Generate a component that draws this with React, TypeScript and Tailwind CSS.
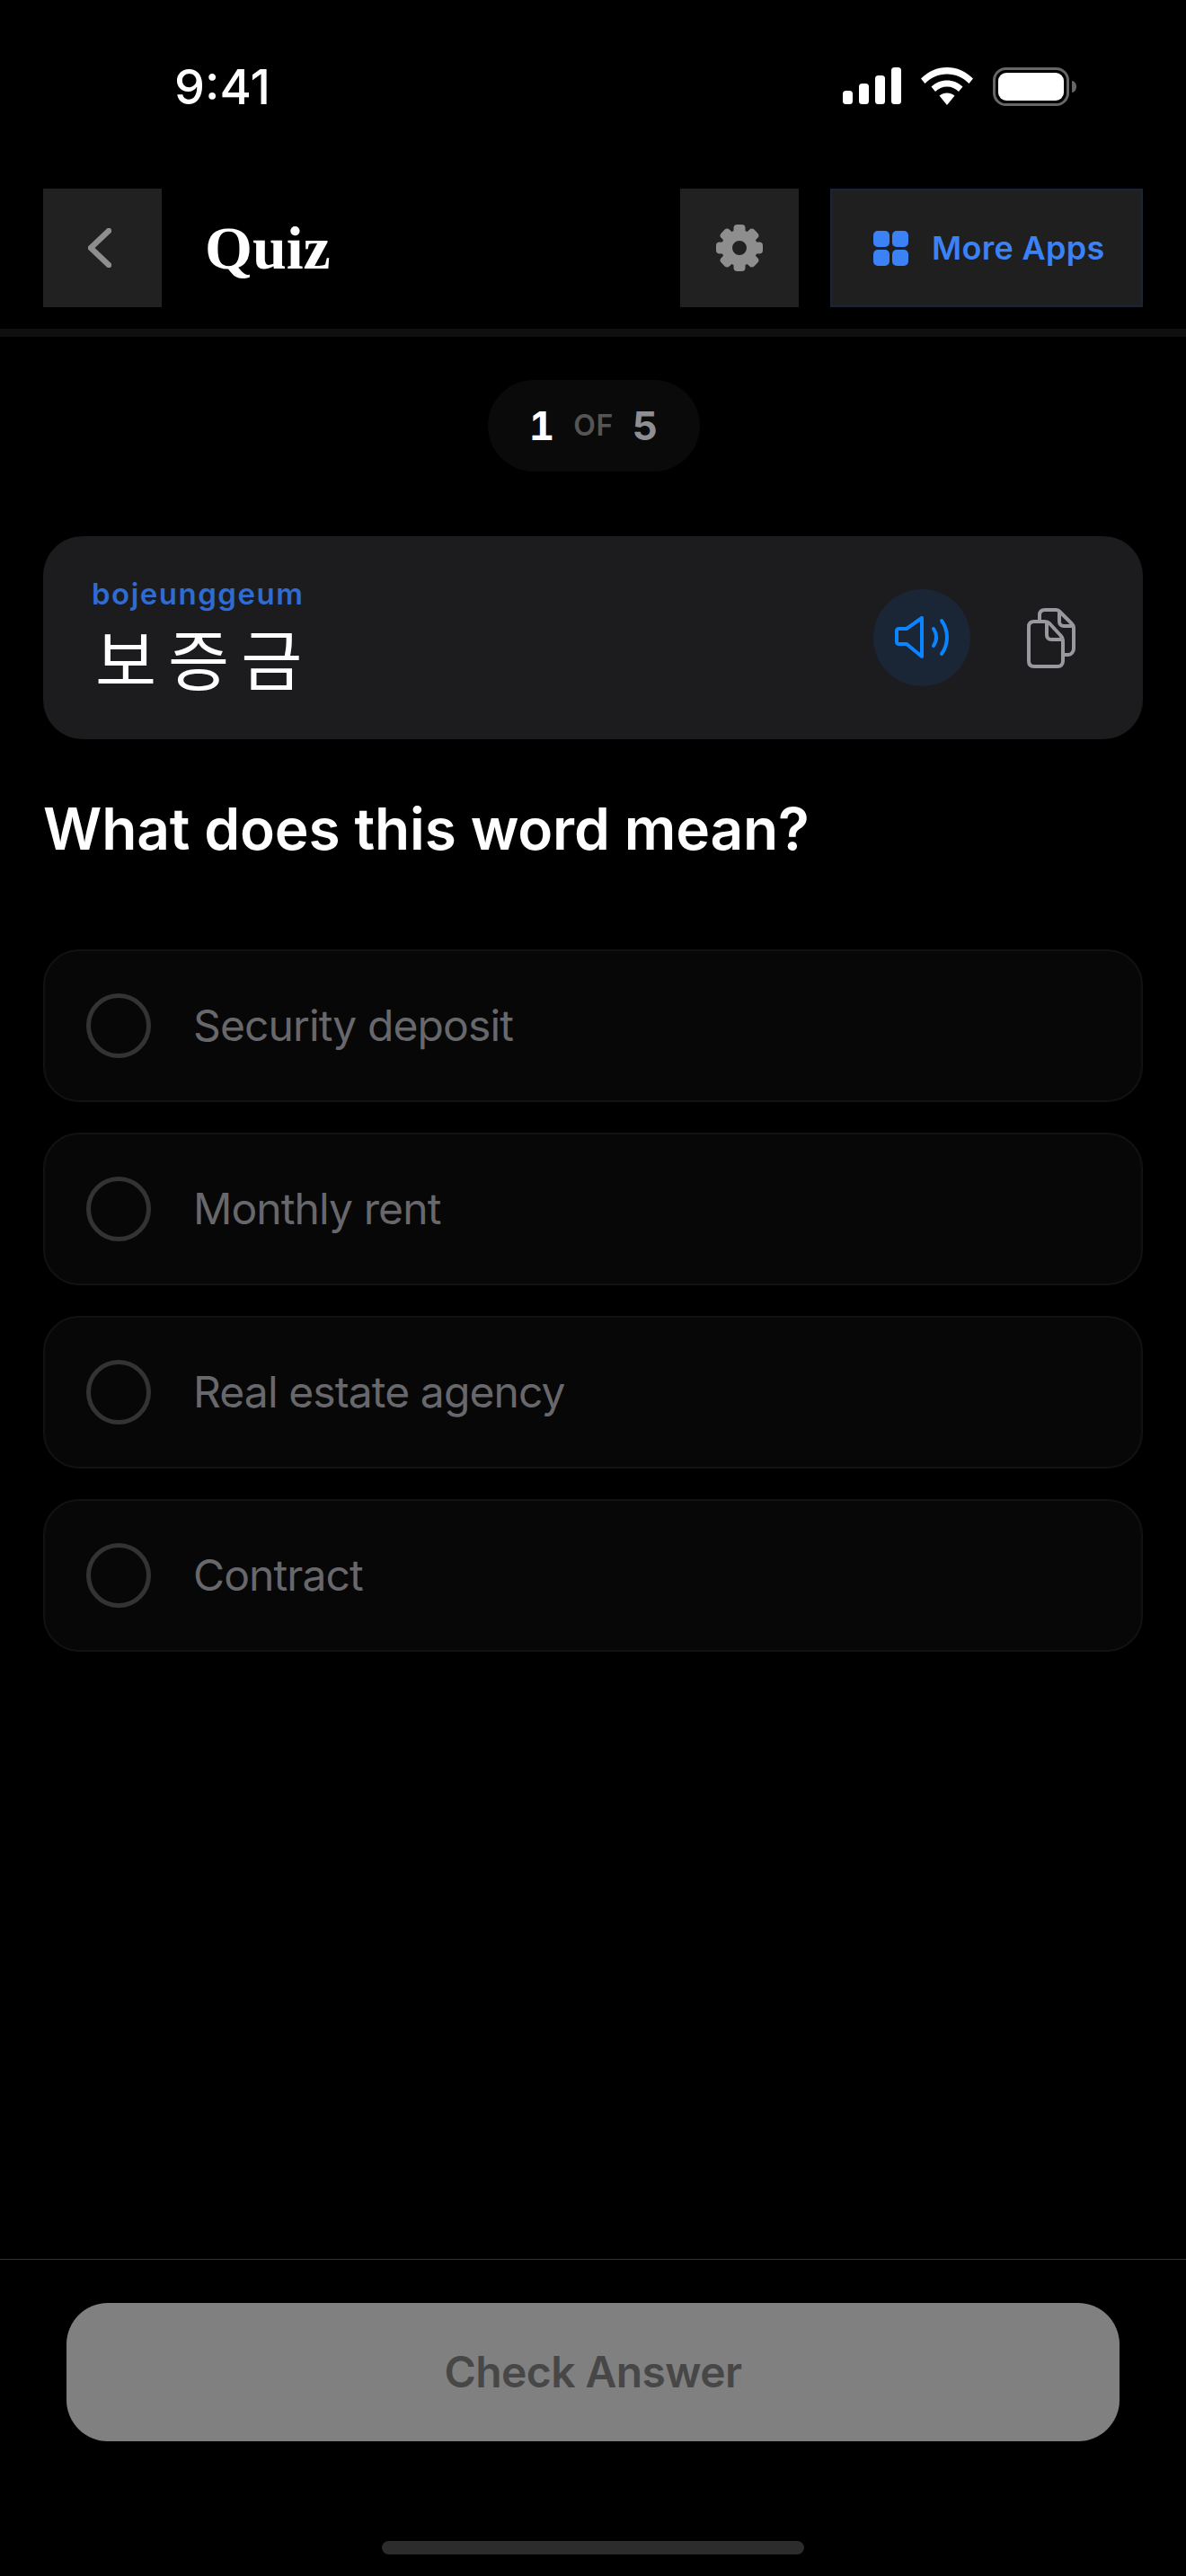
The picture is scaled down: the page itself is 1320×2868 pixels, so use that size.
const inter = { fontFamily: 'Inter, sans-serif' };

function Option({ label }: { label: string }) {
  return (
    <div className="flex h-[170px] items-center gap-[47px] rounded-[40px] border-2 border-[#121212] bg-[#070707] pl-[46px]">
      <div className="h-[72px] w-[72px] rounded-full border-[5px] border-[#333333]" />
      <span className="text-[48px] leading-none tracking-[-0.9px] text-[#68686c]">{label}</span>
    </div>
  );
}

function Signal() {
  return (
    <svg width="65" height="41" viewBox="0 0 65 41" fill="#fff">
      <rect x="0" y="26" width="11" height="15" rx="3.5" />
      <rect x="18" y="18" width="11" height="23" rx="3.5" />
      <rect x="36" y="9" width="11" height="32" rx="3.5" />
      <rect x="54" y="0" width="11" height="41" rx="3.5" />
    </svg>
  );
}

function Wifi() {
  return (
    <svg width="58" height="42" viewBox="0 0 58 42" fill="#fff">
      <path d="M29 0C40 0 50 4.500 58 12.500L53.500 18C47 11.500 38.500 7.500 29 7.500S11 11.500 4.500 18L0 12.500C8 4.500 18 0 29 0Z" />
      <path d="M29 14.500C35.500 14.500 41.500 17 46.500 21.500L42 27C38.500 23.500 34 21.500 29 21.500S19.500 23.500 16 27L11.500 21.500C16.500 17 22.500 14.500 29 14.500Z" />
      <path d="M29 28.500C32 28.500 35 29.500 37.500 31.500L29 42L20.500 31.500C23 29.500 26 28.500 29 28.500Z" />
    </svg>
  );
}

function Battery() {
  return (
    <svg width="93" height="43" viewBox="0 0 93 43">
      <rect x="1.500" y="1.500" width="82" height="40" rx="13" fill="none" stroke="#666" strokeWidth="3" />
      <rect x="6" y="6" width="73" height="31" rx="9" fill="#fff" />
      <path d="M88 15C91 15.500 93 18 93 21.500S91 27.500 88 28Z" fill="#666" />
    </svg>
  );
}

function Gear() {
  const teeth = [0, 45, 90, 135, 180, 225, 270, 315];
  return (
    <svg width="52" height="52" viewBox="0 0 52 52" fill="#8e8e8e">
      {teeth.map((a) => (
        <rect key={a} x="19.500" y="0" width="13" height="14" rx="4" transform={`rotate(${a} 26 26)`} />
      ))}
      <path fillRule="evenodd" d="M26 6a20 20 0 1 0 0 40a20 20 0 1 0 0-40ZM26 18a8 8 0 1 1 0 16a8 8 0 1 1 0-16Z" />
    </svg>
  );
}

function Speaker() {
  return (
    <svg width="60" height="48" viewBox="0 0 60 48" fill="none" stroke="#0a84ff" strokeWidth="4" strokeLinecap="round" strokeLinejoin="round">
      <path d="M4 14H13L30 2V45L13 31H4C3 31 2 30 2 29V16C2 15 3 14 4 14Z" />
      <path d="M43 14C47 20 47 27 43 33" />
      <path d="M52 5C60 16 60 31 52 42" />
    </svg>
  );
}

function Copy() {
  return (
    <svg width="54" height="67" viewBox="0 0 54 67" fill="none" stroke="#98989e" strokeWidth="4" strokeLinejoin="round">
      <path d="M14 15V8C14 4 16 2 20 2H32C33.500 2 35 2.500 36 3.500L49.500 17C51 18.500 52 20 52 22V45C52 49 49 52 46 52H40" />
      <path d="M36 3V15C36 18 38 20 41 20H51" />
      <path d="M8 15H20C22 15 23.500 15.500 25 17L37 30C39 32 40 33.500 40 36V59C40 63 37.500 65 34 65H8C4 65 2 63 2 59V21C2 17 4 15 8 15Z" />
      <path d="M22 16V30C22 33 24 35 27 35H39" />
    </svg>
  );
}

export default function App() {
  return (
    <div className="flex h-[2868px] w-[1320px] flex-col bg-black" style={inter}>
      <div className="flex h-[210px] items-start justify-between pl-[194px] pr-[122px] pt-[75px]">
        <span className="text-[54px] font-medium leading-[44px] text-white">9:41</span>
        <div className="flex items-start gap-[22px]">
          <Signal />
          <Wifi />
          <Battery />
        </div>
      </div>

      <div className="flex h-[132px] items-center px-[48px]">
        <button className="flex h-[132px] w-[132px] items-center bg-[#212121] pl-[50px]">
          <svg width="26" height="44" viewBox="0 0 26 44" fill="none" stroke="#8e8e8e" strokeWidth="6.500" strokeLinecap="round" strokeLinejoin="round">
            <path d="M23 3L3 22L23 41" />
          </svg>
        </button>
        <span className="ml-[48px] text-[68px] font-bold leading-none text-white" style={{ fontFamily: '"Liberation Serif", serif' }}>Quiz</span>
        <button className="ml-auto flex h-[132px] w-[132px] items-center justify-center bg-[#212121]">
          <Gear />
        </button>
        <button className="ml-[35px] flex h-[132px] w-[348px] items-center gap-[26px] border-2 border-[#1a2538] bg-[#1f1f1f] pl-[46px]">
          <span className="grid grid-cols-2 gap-[3px]">
            <i className="h-[18px] w-[18px] rounded-[5px] bg-[#3b82f6]" />
            <i className="h-[18px] w-[18px] rounded-[5px] bg-[#3b82f6]" />
            <i className="h-[18px] w-[18px] rounded-[5px] bg-[#3b82f6]" />
            <i className="h-[18px] w-[18px] rounded-[5px] bg-[#3b82f6]" />
          </span>
          <span className="text-[36px] font-semibold leading-none tracking-[0.3px] text-[#3b82f6]">More Apps</span>
        </button>
      </div>

      <div className="mt-[24px] h-[9px] bg-[#0f0f0f]" />

      <div className="mt-[48px] flex justify-center">
        <div className="ml-[1px] flex h-[102px] w-[236px] items-center justify-center gap-[21px] rounded-full bg-[#0a0a0a] tabular-nums">
          <span className="text-[44px] font-bold leading-none text-white">1</span>
          <span className="text-[32px] font-semibold leading-none tracking-[0.5px] text-[#555555]">OF</span>
          <span className="text-[44px] font-bold leading-none text-[#8e8e93]">5</span>
        </div>
      </div>

      <div className="mx-[48px] mt-[72px] flex h-[226px] items-center rounded-[44px] bg-[#1c1c1e] pl-[54px]">
        <div className="flex flex-col pb-[6px]">
          <span className="text-[33px] font-semibold leading-[36px] tracking-[1.5px] text-[#2f6bd0]">bojeunggeum</span>
          <span className="ml-[4px] mt-[12px] text-[74px] leading-[80px] tracking-[13px] text-white" style={{ fontFamily: '"Noto Sans CJK KR", sans-serif' }}>보증금</span>
        </div>
        <div className="ml-auto flex h-[108px] w-[108px] items-center justify-center rounded-full bg-[#1a2636]">
          <Speaker />
        </div>
        <div className="ml-[63px] mr-[75px]">
          <Copy />
        </div>
      </div>

      <h1 className="mx-[48px] mt-[64px] text-[64px] font-semibold leading-[72px] tracking-[-0.15px] text-white">What does this word mean?</h1>

      <div className="mx-[48px] mt-[98px] flex flex-col gap-[34px]">
        <Option label="Security deposit" />
        <Option label="Monthly rent" />
        <Option label="Real estate agency" />
        <Option label="Contract" />
      </div>

      <div className="mt-auto border-t border-[#333333] px-[74px] pt-[48px]">
        <button className="flex h-[154px] w-full items-center justify-center rounded-[46px] bg-[#808080] text-[48px] font-semibold tracking-[-0.6px] text-[#474747]">Check Answer</button>
      </div>
      <div className="mx-auto mb-[24px] mt-[111px] h-[15px] w-[470px] rounded-full bg-[#2c2c2c]" />
    </div>
  );
}
